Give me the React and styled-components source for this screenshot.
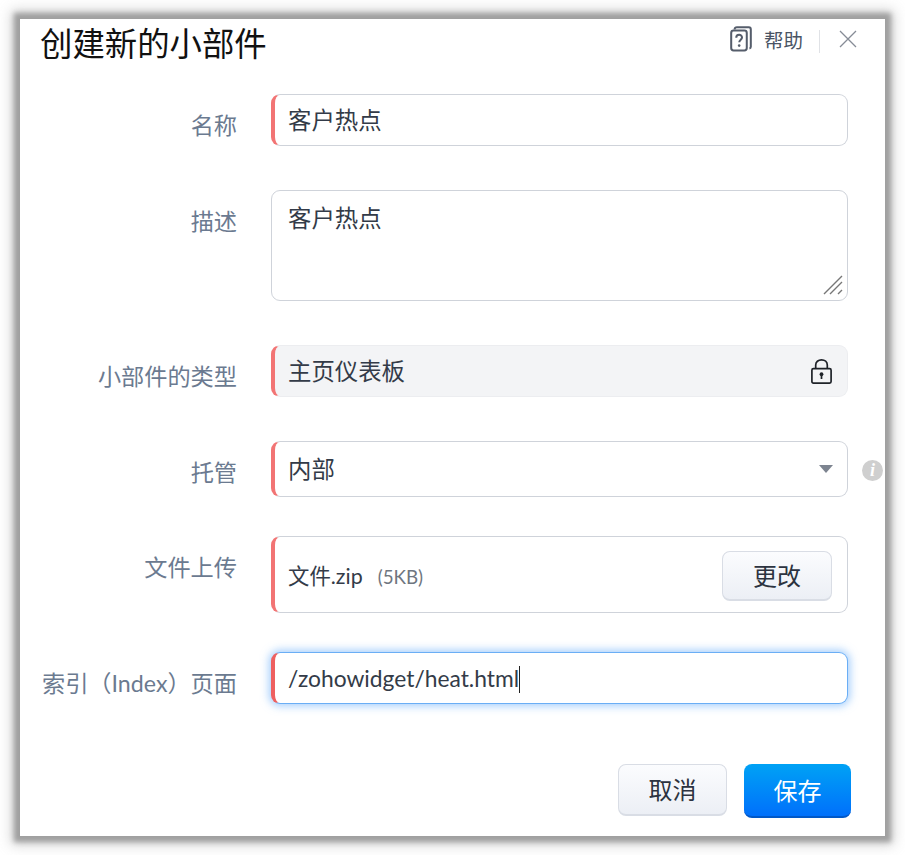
import React from "react";
import styled, { createGlobalStyle } from "styled-components";

const FONT = `Lato, "Noto Sans CJK SC", sans-serif`;

const Global = createGlobalStyle`
  html, body { margin: 0; padding: 0; background: #fff; }
  body { width: 905px; height: 855px; overflow: hidden; font-family: ${FONT}; }
`;

const Page = styled.div`
  width: 905px;
  height: 855px;
  padding: 19px 20px;
  box-sizing: border-box;
`;

const Dialog = styled.div`
  width: 865px;
  height: 817px;
  background: #fff;
  box-shadow: 0 0 5px 6px #a0a0a0, 0 0 12px 9px rgba(160, 160, 160, 0.45);
  display: flex;
  flex-direction: column;
`;

const Header = styled.header`
  height: 75px;
  display: flex;
  align-items: flex-start;
  justify-content: space-between;
  padding: 0 28px 0 20px;
`;

const Title = styled.h1`
  margin: 0;
  font-size: 32.4px;
  line-height: 50px;
  font-weight: 400;
  color: #111;
`;

const Tools = styled.div`
  display: flex;
  align-items: center;
  height: 40px;
`;

const HelpText = styled.span`
  font-size: 19.5px;
  color: #4a5464;
  margin-left: 12px;
`;

const Divider = styled.span`
  width: 1px;
  height: 23px;
  margin: 4px 19px 0 16px;
  background: #e0e2e6;
`;

const Form = styled.div`
  display: flex;
  flex-direction: column;
`;

const Row = styled.div`
  display: grid;
  grid-template-columns: 217px 577px;
  column-gap: 34px;
  align-items: start;
  margin-bottom: ${(p) => p.$after}px;
`;

const Label = styled.label`
  justify-self: end;
  font-size: 23.2px;
  line-height: 34px;
  padding-top: 14px;
  color: #6b7a90;
  white-space: nowrap;
`;

const Field = styled.div`
  position: relative;
  height: ${(p) => p.$h}px;
  box-sizing: border-box;
  display: flex;
  align-items: center;
  justify-content: space-between;
  padding: 0 15px 0 13px;
  border: 1px solid #cfd3da;
  border-left: 4px solid #f27474;
  border-radius: 9px;
  background: #fff;
  font-size: 23.4px;
  color: #333b48;
`;

const TextAreaField = styled(Field)`
  align-items: flex-start;
  padding: 10px 15px 0 16px;
  border-left: 1px solid #cfd3da;
`;

const LockedField = styled(Field)`
  background: #f3f4f6;
  border-color: #ecedf0;
  border-left-color: #f27474;
`;

const FocusField = styled(Field)`
  border-color: #6aaef5;
  border-left-color: #ee6060;
  box-shadow: 0 0 8px 2px rgba(90, 165, 250, 0.55);
`;

const Value = styled.span`
  line-height: 34px;
  white-space: nowrap;
`;

const PathValue = styled(Value)`
  font-size: 22.8px;
`;

const Caret = styled.span`
  display: inline-block;
  width: 1px;
  height: 27px;
  background: #222;
  vertical-align: -6px;
`;

const Resize = styled.svg`
  position: absolute;
  right: 4px;
  bottom: 5px;
`;

const Arrow = styled.svg`
  margin-right: -1px;
`;

const Info = styled.span`
  position: absolute;
  right: -36px;
  top: 18px;
  width: 21px;
  height: 21px;
  border-radius: 50%;
  background: #cfcfcf;
  color: #fff;
  font: italic 700 18px/21px "Liberation Serif", serif;
  text-align: center;
`;

const FileMeta = styled.div`
  display: flex;
  align-items: baseline;
  gap: 15px;
`;

const FileName = styled.span`
  font-size: 21.4px;
`;

const FileSize = styled.span`
  font-size: 18.8px;
  color: #6f7680;
`;

const Button = styled.button`
  height: ${(p) => p.$h}px;
  width: ${(p) => p.$w}px;
  padding: 0 0 2px;
  box-sizing: border-box;
  border-radius: 8px;
  font-family: ${FONT};
  font-size: 24px;
  border: 1px solid #d9dde5;
  border-bottom-width: 2px;
  background: linear-gradient(#fbfcfe, #eceff5);
  color: #2c3340;
`;

const ChangeButton = styled(Button)`
  margin-top: 2px;
`;

const PrimaryButton = styled(Button)`
  border: none;
  border-bottom: 2px solid #0058c8;
  background: linear-gradient(#00a2f5, #0070fb);
  color: #fff;
`;

const Footer = styled.footer`
  display: flex;
  justify-content: flex-end;
  align-items: flex-start;
  gap: 17px;
  padding-right: 34px;
  margin-top: 60px;
`;

const CloseIcon = () => (
  <svg width="18" height="18" viewBox="0 0 18 18" fill="none" stroke="#868c96" strokeWidth="1.3">
    <path d="M1 1 17 17M17 1 1 17" />
  </svg>
);

const HelpIcon = () => (
  <svg width="22" height="26" viewBox="0 0 24 28" fill="none" stroke="#555d6b" strokeWidth="2.2">
    <path d="M5 3.5C5 2 6 1.3 7.5 1.3H20.5C22 1.3 22.7 2.2 22.7 3.6V22.5c0 1-.5 1.7-1.5 1.9" />
    <rect x="1.3" y="4.8" width="17" height="21.7" rx="2.6" />
    <path d="M6.8 12.7c0-4.4 6.3-4.4 6.3-.3 0 2.3-3 2.4-3 5.2" strokeWidth="2.2" />
    <circle cx="10" cy="21.2" r="1.4" fill="#555d6b" stroke="none" />
  </svg>
);

const LockIcon = () => (
  <svg width="21" height="25" viewBox="0 0 21 25" fill="none" stroke="#1f2329" strokeWidth="1.7">
    <path d="M4.7 9.7V6C4.7 2.8 7.3.9 10.5.9s5.8 1.9 5.8 5.1v3.7" />
    <rect x=".9" y="9.7" width="19.2" height="14.4" rx="1.5" />
    <circle cx="10.5" cy="15.2" r="1.9" fill="#1f2329" stroke="none" />
    <path d="M10.5 15.2v4.8" strokeWidth="1.7" />
  </svg>
);

export default function App() {
  return (
    <Page>
      <Global />
      <Dialog>
        <Header>
          <Title>创建新的小部件</Title>
          <Tools>
            <HelpIcon />
            <HelpText>帮助</HelpText>
            <Divider />
            <CloseIcon />
          </Tools>
        </Header>
        <Form>
          <Row $after={44}>
            <Label>名称</Label>
            <Field $h={52}>
              <Value>客户热点</Value>
            </Field>
          </Row>
          <Row $after={44}>
            <Label>描述</Label>
            <TextAreaField $h={111}>
              <Value>客户热点</Value>
              <Resize width="20" height="20" viewBox="0 0 20 20" stroke="#777" strokeWidth="1.4">
                <path d="M1 19 19 1M7 19 19 7M15 19l4-4" />
              </Resize>
            </TextAreaField>
          </Row>
          <Row $after={44}>
            <Label>小部件的类型</Label>
            <LockedField $h={52}>
              <Value>主页仪表板</Value>
              <LockIcon />
            </LockedField>
          </Row>
          <Row $after={39}>
            <Label>托管</Label>
            <Field $h={56}>
              <Value>内部</Value>
              <Arrow width="14" height="8" viewBox="0 0 14 8">
                <path d="M0 0h14L7 8z" fill="#7d8490" />
              </Arrow>
              <Info>i</Info>
            </Field>
          </Row>
          <Row $after={39}>
            <Label>文件上传</Label>
            <Field $h={77}>
              <FileMeta>
                <FileName>文件.zip</FileName>
                <FileSize>(5KB)</FileSize>
              </FileMeta>
              <ChangeButton $w={110} $h={50}>更改</ChangeButton>
            </Field>
          </Row>
          <Row $after={0}>
            <Label>索引（Index）页面</Label>
            <FocusField $h={52}>
              <PathValue>/zohowidget/heat.html<Caret /></PathValue>
            </FocusField>
          </Row>
        </Form>
        <Footer>
          <Button $w={109} $h={52}>取消</Button>
          <PrimaryButton $w={107} $h={54}>保存</PrimaryButton>
        </Footer>
      </Dialog>
    </Page>
  );
}
